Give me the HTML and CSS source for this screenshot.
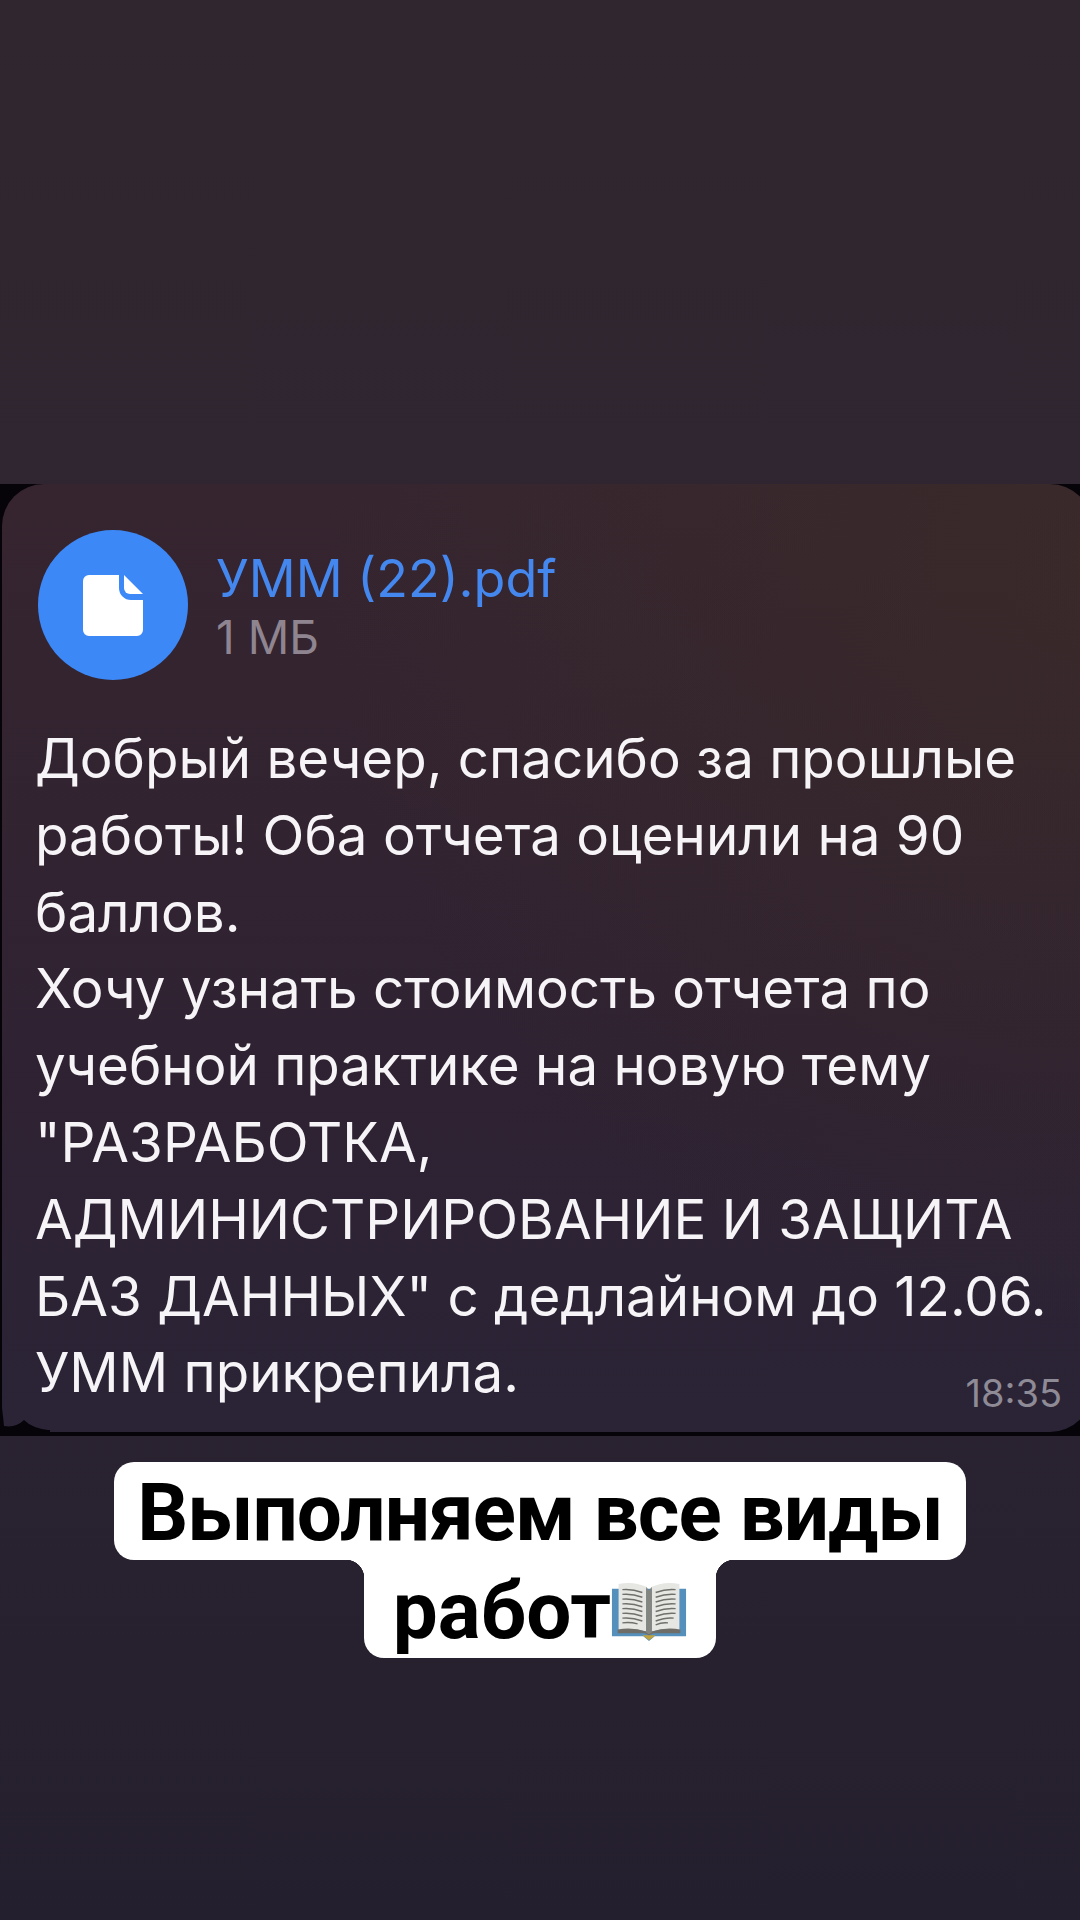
FILE: index.html
```html
<!DOCTYPE html>
<html lang="ru">
<head>
    <meta charset="UTF-8">
    <title>Выполняем все виды работ</title>
    <link rel="stylesheet" href="styles.css">
</head>
<body>

    <div class="top-space"></div>

    <div class="shot">
        <div class="bubble">
            <div class="file-row">
                <div class="file-icon">
                    <svg width="60" height="61" viewBox="0 0 60 61">
                        <path d="M6 0H36V13A12 12 0 0 0 48 25H60V55A6 6 0 0 1 54 61H6A6 6 0 0 1 0 55V6A6 6 0 0 1 6 0Z" fill="#fff"/>
                        <path d="M41 0 60 19H47A6 6 0 0 1 41 13Z" fill="#fff"/>
                    </svg>
                </div>
                <div class="file-info">
                    <div class="file-name">УММ (22).pdf</div>
                    <div class="file-size">1 МБ</div>
                </div>
            </div>
            <div class="msg">
                <div>Добрый вечер, спасибо за прошлые</div>
                <div>работы! Оба отчета оценили на 90</div>
                <div>баллов.</div>
                <div>Хочу узнать стоимость отчета по</div>
                <div>учебной практике на новую тему</div>
                <div>"РАЗРАБОТКА,</div>
                <div>АДМИНИСТРИРОВАНИЕ И ЗАЩИТА</div>
                <div>БАЗ ДАННЫХ" с дедлайном до 12.06.</div>
                <div>УММ прикрепила.</div>
            </div>
            <span class="time">18:35</span>
            <svg class="tail" width="50" height="24" viewBox="0 0 50 24">
                <path d="M2 0V18H0V24H50V22H48Q32 20 24 12Q16 20 4 18Q3 8 2 0Z" fill="#060409"/>
            </svg>
        </div>
    </div>

    <div class="caption">
        <div class="cap-line cap-first">Выполняем все виды</div>
        <div class="cap-line cap-second">работ
            <svg class="book" width="76" height="59" viewBox="0 0 80 62">
                <path d="M1 7H79V57H46L40 62 34 57H1Z" fill="#5590bd"/>
                <path d="M33 56H47L40 61Z" fill="#c2a23a"/>
                <path d="M8 2Q24 -1 37 5V52Q22 48 8 51Z" fill="#e6e6e3"/>
                <path d="M43 5Q56 -1 72 2V51Q58 48 43 52Z" fill="#e6e6e3"/>
                <path d="M7 50Q22 47 37 52L40 54 43 52Q58 47 73 50V54H45L40 56 35 54H7Z" fill="#6f6d68"/>
                <path d="M37 5 40 9 43 5V53L40 55 37 53Z" fill="#85857f"/>
                <path d="M12 8Q22 7 33 11M12 13Q22 12 33 16M12 18Q22 17 33 21M12 23Q22 22 33 26M12 28Q22 27 33 31M12 33Q22 32 33 36M12 38Q22 37 33 41M12 43Q20 42 28 44M47 11Q58 7 68 8M47 16Q58 12 68 13M47 21Q58 17 68 18M47 26Q58 22 68 23M47 31Q58 27 68 28M47 36Q58 32 68 33M47 41Q58 37 66 38M47 45Q54 42 60 43" fill="none" stroke="#6f6f6b" stroke-width="1.5"/>
            </svg>
        </div>
    </div>

</body>
</html>
```

FILE: styles.css
```css
/* Основные стили */
body {
    margin: 0;
    width: 1080px;
    height: 1920px;
    overflow: hidden;
    display: flex;
    flex-direction: column;
    background: linear-gradient(180deg, #30262f 0%, #2f2532 50%, #241f2e 100%);
    font-family: 'Inter', 'Liberation Sans', sans-serif;
}

.top-space {
    height: 484px;
}

/* Скриншот сообщения */
.shot {
    height: 952px;
    background-color: #060409;
    padding-left: 2px;
    box-sizing: border-box;
}

.bubble {
    position: relative;
    height: 948px;
    width: 1090px;
    border-radius: 42px 42px 42px 0;
    box-sizing: border-box;
    padding: 46px 0 0 36px;
    background:
        radial-gradient(circle at 100% 8%, rgba(62, 46, 36, 0.5), rgba(62, 46, 36, 0) 55%),
        linear-gradient(180deg, #36252f 0%, #2f2232 60%, #2a2436 100%);
    color: #fff;
}

.file-row {
    display: flex;
    gap: 28px;
    align-items: center;
}

.file-icon {
    width: 150px;
    height: 150px;
    border-radius: 50%;
    background-color: #3d88f7;
    display: flex;
    align-items: center;
    justify-content: center;
}

.file-info {
    padding-top: 5px;
}

.file-name {
    font-size: 52px;
    line-height: 60px;
    color: #4488ef;
}

.file-size {
    font-size: 46px;
    line-height: 57px;
    color: #8f8590;
}

.msg {
    margin-top: 40px;
    margin-left: -3px;
    font-size: 54.7px;
    line-height: 76.8px;
    white-space: nowrap;
    color: #f6f4f6;
}

.time {
    position: absolute;
    right: 30px;
    bottom: 17px;
    font-size: 38px;
    line-height: 44px;
    color: #8f8b96;
}

.tail {
    position: absolute;
    left: -2px;
    bottom: 0;
}

/* Подпись снизу */
.caption {
    margin-top: 26px;
    display: flex;
    flex-direction: column;
    align-items: center;
    font-family: 'Roboto', 'Liberation Sans', sans-serif;
    font-weight: 700;
    color: #000;
}

.cap-line {
    background-color: #fff;
    display: flex;
    align-items: center;
    font-size: 80px;
    height: 98px;
    padding-top: 4px;
    box-sizing: border-box;
    white-space: nowrap;
}

.cap-first {
    width: 852px;
    justify-content: center;
    border-radius: 20px;
    letter-spacing: -1px;
}

.cap-second {
    position: relative;
    width: 352px;
    justify-content: center;
    border-radius: 0 0 20px 20px;
}

/* Скругления на стыке строк */
.cap-second::before,
.cap-second::after {
    content: '';
    position: absolute;
    top: 0;
    width: 18px;
    height: 18px;
}

.cap-second::before {
    left: -18px;
    background: radial-gradient(circle at 0 100%, transparent 18px, #fff 18.5px);
}

.cap-second::after {
    right: -18px;
    background: radial-gradient(circle at 100% 100%, transparent 18px, #fff 18.5px);
}

.book {
    display: block;
}
```
